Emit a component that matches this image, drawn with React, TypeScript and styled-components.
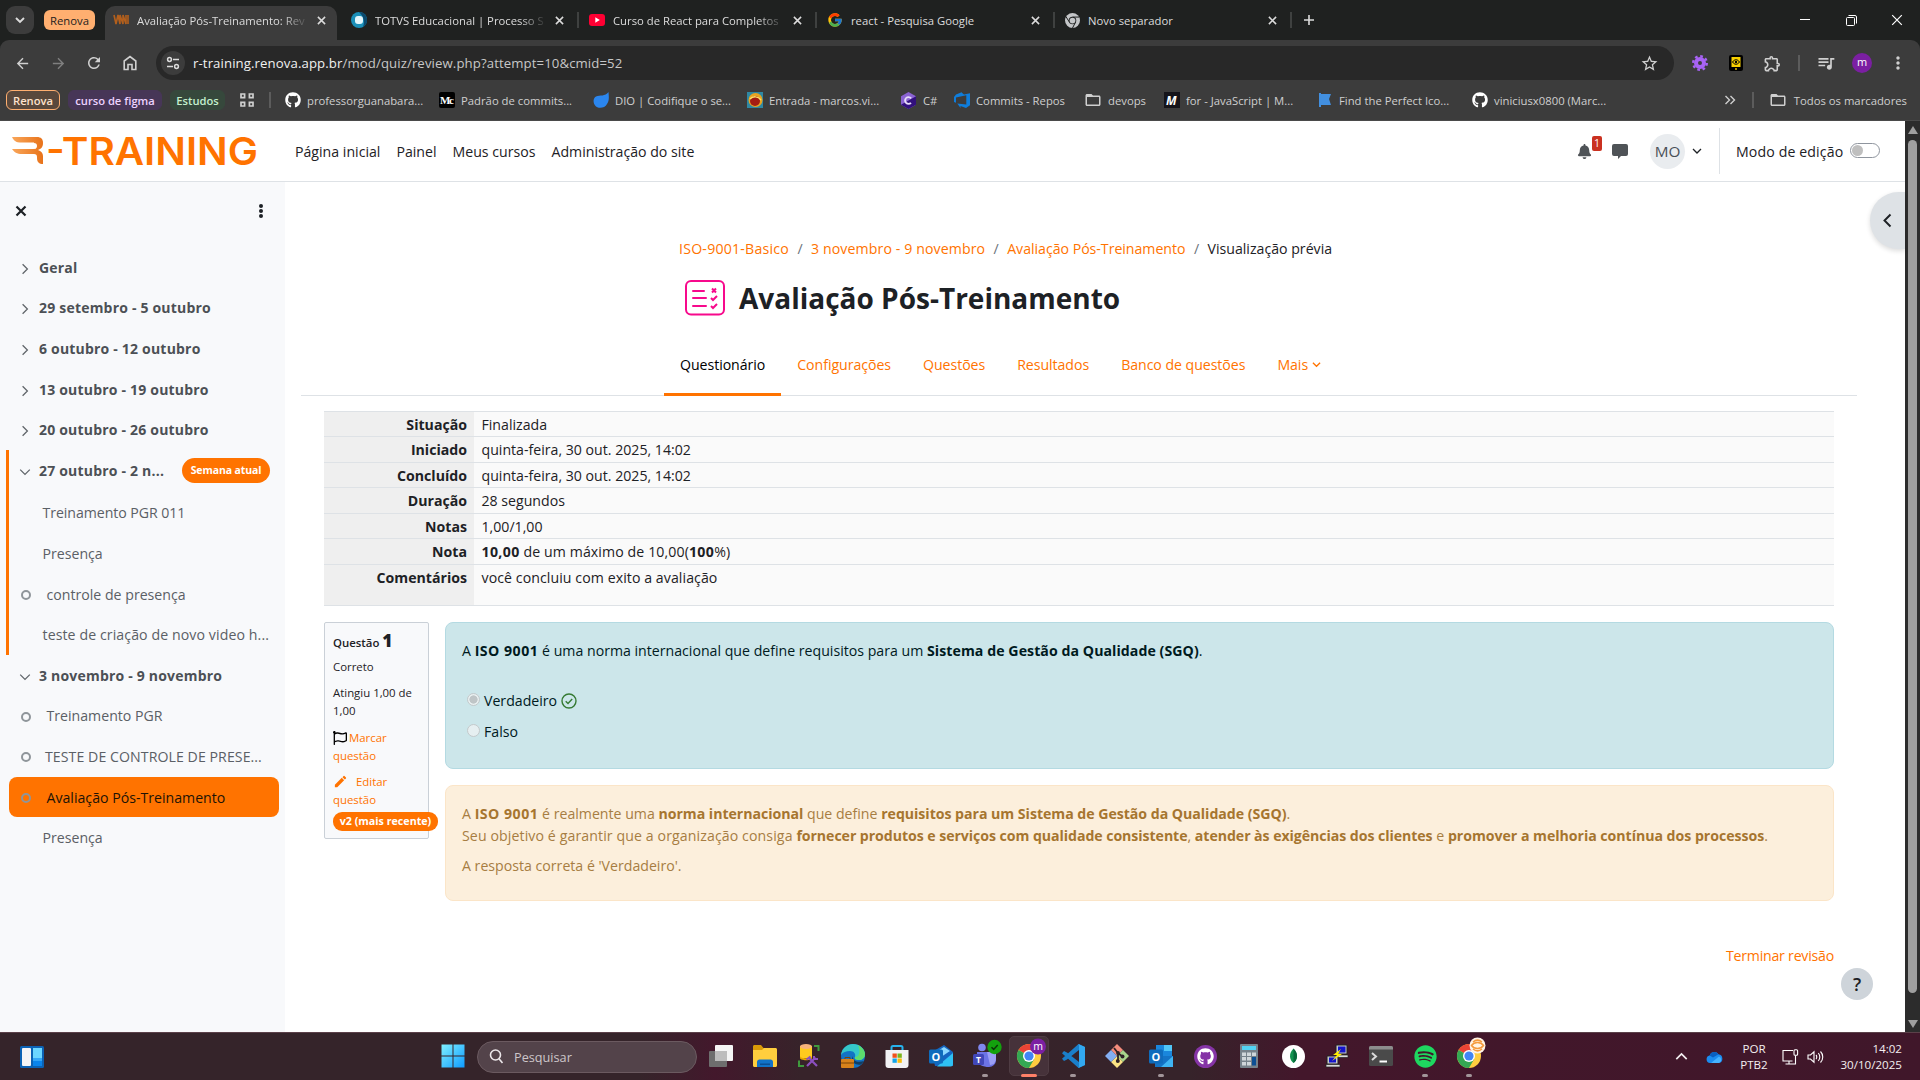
import React from "react";
import styled, { createGlobalStyle, css } from "styled-components";
import { FaGithub, FaBell, FaRegFlag, FaSpotify } from "react-icons/fa";
import { FcGoogle } from "react-icons/fc";
import {
  MdArrowBack, MdArrowForward, MdRefresh, MdStarBorder, MdOutlineExtension, MdQueueMusic, MdMoreVert,
  MdFolderOpen, MdModeEdit,
} from "react-icons/md";

const ORANGE = "#ff7300";
const FONT = `"Open Sans", "Noto Sans", sans-serif`;

const GlobalStyle = createGlobalStyle`
  * { box-sizing: border-box; }
  body { margin: 0; background: #fff; overflow: hidden; }
  svg { display: block; flex: none; }
  p { margin: 0; }
`;

const Screen = styled.div`
  width: 1920px;
  height: 1080px;
  display: flex;
  flex-direction: column;
  overflow: hidden;
  font-family: ${FONT};
  font-size: 14.15px;
  color: #1d2125;
  white-space: nowrap;
`;

/* ---------- Browser ---------- */

const TabStrip = styled.div`
  height: 40px;
  flex: none;
  display: flex;
  align-items: flex-end;
  background: #1f2120;
  padding-left: 6px;
  color: #dcdcdc;
  font-size: 11.3px;
`;
const TabSearch = styled.div`
  width: 28px;
  height: 28px;
  margin-bottom: 6px;
  border-radius: 9px;
  background: #3c3c3c;
  display: grid;
  place-items: center;
`;
const GroupChip = styled.div`
  width: 51px;
  height: 20px;
  margin: 0 10px 10px;
  border-radius: 6px;
  background: #ffaf70;
  color: #24211e;
  display: grid;
  place-items: center;
`;
const Tab = styled.div<{ $active?: boolean; $first?: boolean }>`
  width: ${(p) => (p.$active ? 232 : p.$first ? 242 : 238)}px;
  height: 34px;
  padding: 0 0 6px ${(p) => (p.$active ? 8 : p.$first ? 14 : 10)}px;
  display: flex;
  align-items: center;
  background: ${(p) => (p.$active ? "#3c3c3c" : "transparent")};
  border-radius: 10px 10px 0 0;
`;
const TabTitle = styled.span<{ $fade?: boolean }>`
  width: 180px;
  flex: none;
  margin-left: 8px;
  ${(p) => p.$fade && css`
    mask-image: linear-gradient(90deg, #000 145px, transparent 172px);
  `}
`;
const TabDivider = styled.i`
  width: 2px;
  height: 16px;
  margin-left: 13px;
  background: #3f4140;
`;
const NewTab = styled.div`
  width: 32px;
  height: 40px;
  display: grid;
  place-items: center;
`;
const WindowControls = styled.div`
  margin-left: auto;
  height: 40px;
  display: flex;
`;
const WindowButton = styled.div`
  width: 46px;
  display: grid;
  place-items: center;
`;
const ToolbarBack = styled.div`
  background: #1f2120;
`;
const Toolbar = styled.div`
  height: 46px;
  display: flex;
  align-items: center;
  background: #3c3c3c;
  color: #d0d0d0;
  border-radius: 9px 9px 0 0;
  padding: 0 4px;
`;
const ToolButton = styled.div<{ $dim?: boolean }>`
  width: 36px;
  height: 36px;
  display: grid;
  place-items: center;
  opacity: ${(p) => (p.$dim ? 0.45 : 1)};
`;
const AddressBar = styled.div`
  width: 1518px;
  height: 34px;
  margin-left: 8px;
  margin-right: 8px;
  border-radius: 17px;
  background: #282828;
  display: flex;
  align-items: center;
  padding: 0 7px 0 5px;
`;
const SiteInfo = styled.div`
  width: 24px;
  height: 24px;
  border-radius: 50%;
  background: #3c3c3c;
  display: grid;
  place-items: center;
  margin-right: 8px;
`;
const Url = styled.span`
  flex: 1;
  font-size: 13.2px;
  color: #c7c7c7;
  letter-spacing: 0.1px;
  b { font-weight: 400; color: #f1f1f1; }
`;
const ToolDivider = styled.i`
  width: 2px;
  height: 16px;
  margin: 0 8px;
  background: #5c5c5c;
`;
const Avatar = styled.div`
  width: 20px;
  height: 20px;
  border-radius: 50%;
  background: #7b1fa2;
  color: #fff;
  font-size: 11px;
  line-height: 18px;
  text-align: center;
`;
const Bookmarks = styled.div`
  height: 35px;
  flex: none;
  display: flex;
  align-items: center;
  padding: 0 13px 6px 6px;
  background: #3c3c3c;
  border-bottom: 1px solid #4a4a4a;
  color: #cfcfcf;
  font-size: 11.3px;
`;
const BookmarkChip = styled.div<{ $w: number; $bg: string; $fg: string; $line?: string }>`
  width: ${(p) => p.$w}px;
  height: 20px;
  margin-right: 8px;
  border-radius: 6px;
  border: 1px solid ${(p) => p.$line ?? p.$bg};
  background: ${(p) => p.$bg};
  color: ${(p) => p.$fg};
  font-weight: 600;
  font-size: 11.2px;
  display: grid;
  place-items: center;
`;
const BookmarkDivider = styled.i<{ $l: number; $r: number }>`
  width: 2px;
  height: 16px;
  margin: 0 ${(p) => p.$r}px 0 ${(p) => p.$l}px;
  background: #5c5c5c;
`;
const Bookmark = styled.div<{ $w: number }>`
  width: ${(p) => p.$w}px;
  display: flex;
  align-items: center;
  gap: 6px;
`;
const AppsButton = styled.div`
  width: 29px;
  padding-left: 7px;
`;
const BookmarksEnd = styled.div`
  margin-left: auto;
  display: flex;
  align-items: center;
`;
const AllBookmarks = styled.div`
  display: flex;
  align-items: center;
  gap: 7px;
`;

/* ---------- Site ---------- */

const Viewport = styled.div`
  height: 911px;
  flex: none;
  display: flex;
  background: #fff;
`;
const Site = styled.div`
  width: 1905px;
  display: flex;
  flex-direction: column;
`;
const ScrollTrack = styled.div`
  width: 15px;
  background: #2c2c2c;
  display: flex;
  flex-direction: column;
  align-items: center;
  justify-content: space-between;
  padding: 5px 0 4px;
`;
const ScrollThumb = styled.div`
  width: 9px;
  height: 853px;
  margin-bottom: 22px;
  border-radius: 5px;
  background: #9f9f9f;
`;
const Navbar = styled.header`
  height: 61px;
  flex: none;
  display: flex;
  align-items: center;
  border-bottom: 1px solid #dee2e6;
  padding-left: 12px;
`;
const NavLinks = styled.nav`
  display: flex;
  gap: 16px;
  margin-left: 37px;
  margin-top: 1px;
`;
const NavRight = styled.div`
  margin-left: auto;
  height: 60px;
  display: flex;
  align-items: center;
`;
const Bell = styled.div`
  position: relative;
  width: 40px;
  padding-left: 5px;
  color: #4f5357;
`;
const Count = styled.span`
  position: absolute;
  left: 20px;
  top: -8px;
  width: 10px;
  height: 15px;
  border-radius: 2px;
  background: #ca3120;
  color: #fff;
  font-size: 10.5px;
  line-height: 15px;
  text-align: center;
`;
const Initials = styled.div`
  width: 35px;
  height: 35px;
  margin: 1px 7px 0 22px;
  border-radius: 50%;
  background: #e9ecef;
  color: #495057;
  font-size: 15.3px;
  line-height: 34px;
  text-align: center;
`;
const EditMode = styled.div`
  width: 186px;
  height: 46px;
  margin-left: 17px;
  padding-left: 16px;
  border-left: 1px solid #dee2e6;
  letter-spacing: 0.12px;
  display: flex;
  align-items: center;
  gap: 7px;
`;
const Switch = styled.div`
  width: 30px;
  height: 15px;
  margin-top: -1px;
  border: 1px solid #8f959e;
  border-radius: 8px;
  padding: 1px;
  &::before {
    content: "";
    display: block;
    width: 11px;
    height: 11px;
    border-radius: 50%;
    background: #bfbfbf;
  }
`;
const Body = styled.div`
  flex: 1;
  display: flex;
  position: relative;
`;
const Sidebar = styled.aside`
  width: 285px;
  flex: none;
  background: #f8f9fb;
  display: flex;
  flex-direction: column;
`;
const SidebarTop = styled.div`
  height: 65px;
  padding: 21px 20px 0 14px;
  display: flex;
  justify-content: space-between;
`;
const Section = styled.section<{ $current?: boolean }>`
  border-left: 3px solid ${(p) => (p.$current ? ORANGE : "transparent")};
  margin-left: 6px;
`;
const SectionRow = styled.div`
  height: 40.6px;
  display: flex;
  align-items: center;
  padding-left: 10px;
  gap: 8px;
  color: #4c5055;
  font-weight: 700;
  font-size: 14px;
  letter-spacing: 0.2px;
  svg { margin-top: 3px; }
`;
const WeekBadge = styled.span`
  width: 88px;
  height: 25px;
  margin-left: 10px;
  border-radius: 13px;
  background: ${ORANGE};
  color: #fff;
  font-size: 10.5px;
  line-height: 24px;
  letter-spacing: -0.1px;
  text-align: center;
`;
const ActivityList = styled.div<{ $pad: number }>`
  padding-top: ${(p) => p.$pad}px;
`;
const Activity = styled.div<{ $selected?: boolean; $indent: number; $ls?: number }>`
  width: 270px;
  height: 40.6px;
  padding-left: ${(p) => p.$indent}px;
  display: flex;
  align-items: center;
  border-radius: 8px;
  background: ${(p) => (p.$selected ? ORANGE : "transparent")};
  color: ${(p) => (p.$selected ? "#1d1306" : "#5b6066")};
  letter-spacing: ${(p) => p.$ls ?? 0}px;
`;
const Dot = styled.i<{ $gap: number }>`
  width: 10px;
  height: 10px;
  margin: 2px ${(p) => p.$gap}px 0 0;
  border: 2px solid #8f959a;
  border-radius: 50%;
`;
const Content = styled.main`
  flex: 1;
  display: flex;
  flex-direction: column;
  padding: 54px 48px 0 16px;
`;
const PageHead = styled.div`
  padding-left: 378px;
`;
const Breadcrumb = styled.div`
  height: 24px;
  display: flex;
  align-items: center;
  gap: 8px;
  i { font-style: normal; color: #6a737b; width: 6px; text-align: center; }
`;
const Crumb = styled.a<{ $ls: number }>`
  color: ${ORANGE};
  letter-spacing: ${(p) => p.$ls}px;
`;
const TitleRow = styled.div`
  height: 36px;
  margin-top: 20px;
  padding-left: 6px;
  display: flex;
  align-items: center;
  gap: 14px;
`;
const Title = styled.h1`
  margin: 0;
  font-size: 28px;
  line-height: 36px;
  font-weight: 700;
`;
const SubTabs = styled.div`
  display: flex;
  height: 62px;
  margin-top: 18px;
  padding-left: 363px;
  border-bottom: 1px solid #dee2e6;
  letter-spacing: -0.05px;
`;
const SubTab = styled.div<{ $active?: boolean }>`
  height: 62px;
  padding: 2px 16px 0;
  display: flex;
  align-items: center;
  gap: 4px;
  color: ${(p) => (p.$active ? "#000" : ORANGE)};
  border-bottom: 3px solid ${(p) => (p.$active ? ORANGE : "transparent")};
`;
const Attempt = styled.div`
  padding: 14.5px 23px 0;
  display: flex;
  flex-direction: column;
`;
const Summary = styled.div`
  border-top: 1px solid #dee2e6;
`;
const SummaryRow = styled.div<{ $tall?: boolean }>`
  height: ${(p) => (p.$tall ? 41 : 25.5)}px;
  display: flex;
  border-bottom: 1px solid #dee2e6;
  background: #fafafa;
  line-height: 26px;
`;
const SummaryKey = styled.div`
  width: 150px;
  padding-right: 7px;
  text-align: right;
  font-weight: 700;
  background: #efefef;
`;
const SummaryValue = styled.div<{ $ls: number }>`
  padding-left: 7.5px;
  letter-spacing: ${(p) => p.$ls}px;
  b { letter-spacing: 0.35px; }
`;
const Question = styled.div`
  display: flex;
  align-items: flex-start;
  gap: 16px;
  margin-top: 16.5px;
`;
const Info = styled.div`
  width: 105px;
  height: 217px;
  flex: none;
  border: 1px solid #cad0d7;
  border-radius: 2px;
  background: #f8f9fb;
  padding: 7px 8px;
  font-size: 11.4px;
  line-height: 18px;
  white-space: normal;
`;
const InfoTitle = styled.div`
  height: 26px;
  line-height: 26px;
  font-weight: 600;
  font-size: 11.4px;
  white-space: nowrap;
  b { font-size: 17.5px; line-height: 20px; }
`;
const InfoText = styled.div<{ $mt: number }>`
  margin-top: ${(p) => p.$mt}px;
`;
const InfoLink = styled.div<{ $gap: number; $mt: number }>`
  margin-top: ${(p) => p.$mt}px;
  color: ${ORANGE};
  svg {
    display: inline-block;
    vertical-align: -3px;
    margin-right: ${(p) => p.$gap}px;
  }
`;
const Version = styled.div`
  width: 105px;
  height: 19px;
  margin-top: 3px;
  border-radius: 9px;
  background: ${ORANGE};
  color: #fff;
  font-weight: 700;
  font-size: 10.7px;
  line-height: 19px;
  text-align: center;
  white-space: nowrap;
`;
const Answers = styled.div`
  flex: 1;
  display: flex;
  flex-direction: column;
  gap: 16px;
`;
const Strong = styled.b<{ $ls: number }>`
  letter-spacing: ${(p) => p.$ls}px;
`;
const Spaced = styled.span`
  letter-spacing: 0.1px;
`;
const Formulation = styled.div`
  height: 147px;
  padding: 16px;
  border: 1px solid #b4dae2;
  border-radius: 8px;
  background: #cce6ea;
  color: #001a1e;
  line-height: 24px;
`;
const Choice = styled.label<{ $mt: number }>`
  height: 25px;
  margin-top: ${(p) => p.$mt}px;
  padding-left: 5px;
  display: flex;
  align-items: center;
  gap: 4px;
`;
const Radio = styled.i<{ $on?: boolean }>`
  width: 13px;
  height: 13px;
  margin-top: -2px;
  border: 1px solid #c3c9cb;
  border-radius: 50%;
  background: ${(p) => (p.$on ? "radial-gradient(circle, #bfc5c7 0 3.8px, #e8eff0 4.4px)" : "#e6eff1")};
`;
const Outcome = styled.div`
  height: 116px;
  padding: 17px 16px;
  border: 1px solid #fbe5c8;
  border-radius: 8px;
  background: #fcefdc;
  color: #a77d42;
  line-height: 22.4px;
  b { color: #a6752f; }
  p + p { margin-top: 7px; }
`;
const Finish = styled.a`
  align-self: flex-end;
  margin-top: 44px;
  line-height: 22px;
  letter-spacing: -0.22px;
  color: ${ORANGE};
`;
const DrawerToggle = styled.div`
  position: absolute;
  right: 0;
  top: 10px;
  width: 35px;
  height: 57px;
  border-radius: 29px 0 0 29px;
  background: #dee2e6;
  box-shadow: 0 2px 5px rgba(0, 0, 0, 0.14);
  display: grid;
  place-items: center;
`;
const Help = styled.div`
  position: absolute;
  right: 32px;
  bottom: 32px;
  width: 32px;
  height: 32px;
  border-radius: 50%;
  background: #ced4da;
  font-size: 18px;
  font-weight: 600;
  line-height: 32px;
  text-align: center;
`;

/* ---------- Taskbar ---------- */

const Taskbar = styled.footer`
  height: 48px;
  flex: none;
  display: flex;
  align-items: center;
  border-top: 1px solid #5b4049;
  background: linear-gradient(90deg, #35242a 0, #35242a 640px, #43182c 715px, #37232a 800px, #36232a 1190px, #43172b 1300px, #40172a 1920px);
  color: #f3eef0;
  font-size: 11.6px;
`;
const Widgets = styled.div`
  width: 431px;
  padding-left: 20px;
`;
const TaskbarApp = styled.div<{ $active?: boolean }>`
  position: relative;
  width: 44px;
  height: 44px;
  margin-top: -1px;
  display: grid;
  place-items: center;
  ${(p) => p.$active && css`
    &::before {
      content: "";
      position: absolute;
      inset: 2px;
      border-radius: 5px;
      border: 1px solid #4f3c43;
      background: #46323a;
    }
  `}
  svg { position: relative; }
`;
const Running = styled.i<{ $active?: boolean }>`
  position: absolute;
  bottom: 1px;
  left: 50%;
  width: ${(p) => (p.$active ? 16 : 6)}px;
  height: 3px;
  transform: translateX(-50%);
  border-radius: 2px;
  background: ${(p) => (p.$active ? "#ff8068" : "#a29599")};
`;
const SearchBox = styled.div`
  width: 220px;
  height: 32px;
  margin: 0 2px;
  padding-left: 11px;
  border-radius: 16px;
  border: 1px solid #6b5a60;
  background: #53434a;
  display: flex;
  align-items: center;
  gap: 11px;
  font-size: 12.7px;
  color: #cdc6c9;
`;
const Tray = styled.div`
  margin-left: auto;
  padding-right: 18px;
  display: flex;
  align-items: center;
`;
const TrayText = styled.div<{ $align: string; $w: number; $ml: number }>`
  width: ${(p) => p.$w}px;
  margin-left: ${(p) => p.$ml}px;
  text-align: ${(p) => p.$align};
  line-height: 16px;
`;
const TraySpace = styled.div`
  margin-left: 18px;
`;
const TrayIcons = styled.div`
  display: flex;
  align-items: center;
  gap: 8px;
  margin-left: 14px;
`;

/* ---------- Icons ---------- */

const Chevron = ({ dir = "down", size = 9, w = 1.4, color = "currentColor" }: { dir?: string; size?: number; w?: number; color?: string }) => {
  const turn = { down: 0, left: 90, up: 180, right: 270 }[dir] ?? 0;
  return (
    <svg width={size} height={size} viewBox="0 0 10 10">
      <path d="M1 3l4 4 4-4" fill="none" stroke={color} strokeWidth={w} transform={`rotate(${turn} 5 5)`} />
    </svg>
  );
};
const Cross = ({ size, w, color }: { size: number; w: number; color: string }) => (
  <svg width={size} height={size} viewBox="0 0 10 10">
    <path d="M1 1l8 8M9 1l-8 8" stroke={color} strokeWidth={w} fill="none" />
  </svg>
);

const Logo = () => (
  <svg width="246" height="32" viewBox="0 0 246 32">
    <defs>
      <linearGradient id="mark" x1="0" x2="1">
        <stop offset="0" stopColor="#f9a65a" />
        <stop offset="1" stopColor="#e8731a" />
      </linearGradient>
    </defs>
    <path d="M0 2h25c4 0 6 2 6 6s-2 6-5 7c3 1 5 3 5 6v8c-4 0-6-2-6-6v-1c0-2-1-3-3-3H10c-5 0-8-2-10-5h21c3 0 4-1 4-3s-1-3-3-3H10C5 8 2 6 0 2z" fill="url(#mark)" />
    <path d="M1 8h21M1 13h23" stroke="#fff" strokeWidth="1" />
    <text x="34" y="30" fontFamily="Inter, sans-serif" fontSize="38.5" fontWeight="600" fill={ORANGE} textLength="212" lengthAdjust="spacingAndGlyphs">
      -TRAINING
    </text>
  </svg>
);

const ChromeLogo = ({ size, mono, badge }: { size: number; mono?: boolean; badge?: string }) => (
  <svg width={size} height={size} viewBox="0 0 24 24" overflow="visible">
    <circle cx="12" cy="12" r="12" fill={mono ? "#c4c6c8" : "#ffcd40"} />
    {!mono && <path d="M12 12L1.6 6A12 12 0 0 1 22.4 6z" fill="#ea4335" />}
    {!mono && <path d="M1.6 6A12 12 0 0 0 12 24l5.2-9L12 12z" fill="#34a853" />}
    {mono && <path d="M12 6.5h10.4M7.2 14.8L1.6 6M16.8 14.8L12 24" stroke="#1f2120" strokeWidth="1.6" />}
    <circle cx="12" cy="12" r="6" fill={mono ? "#1f2120" : "#fff"} />
    <circle cx="12" cy="12" r="4.6" fill={mono ? "#c4c6c8" : "#4285f4"} />
    {badge === "m" && (
      <>
        <circle cx="21" cy="2.5" r="8" fill="#7b1fa2" />
        <text x="21" y="5.8" textAnchor="middle" fontSize="10.5" fontFamily={FONT} fill="#fff">m</text>
      </>
    )}
    {badge === "o" && (
      <>
        <circle cx="20.5" cy="1.5" r="8" fill="#fff3e4" />
        <path d="M14.5 1.5c3-4 9-4 12 0-3 4-9 4-12 0zM16 -2c3-2.500 6-2.500 9 0M16 5c3 2.500 6 2.500 9 0" fill="none" stroke="#f59a3c" strokeWidth="1.5" />
      </>
    )}
  </svg>
);

const RenovaFavicon = () => (
  <svg width="16" height="16" viewBox="0 0 16 16">
    <path d="M1 3l2 9 2-9 2 9V3l3 9V3l3 9V3M15 3v9" fill="none" stroke="#b35f1c" strokeWidth="1.6" />
  </svg>
);
const TotvsFavicon = () => (
  <svg width="16" height="16" viewBox="0 0 16 16">
    <circle cx="8" cy="8" r="8" fill="#1a8fb8" />
    <path d="M8 0a8 8 0 0 1 4 15c2-5 1-10-4-15z" fill="#0c4a6e" />
    <rect x="4" y="4" width="8" height="8" rx="3" fill="#e2f6fc" />
  </svg>
);
const YoutubeFavicon = () => (
  <svg width="16" height="16" viewBox="0 0 16 16">
    <rect y="2" width="16" height="12" rx="3" fill="#ff0033" />
    <path d="M6.3 5.300L10.800 8l-4.500 2.700z" fill="#fff" />
  </svg>
);
const AppsGrid = () => (
  <svg width="14" height="14" viewBox="0 0 14 14" fill="none" stroke="#cfcfcf" strokeWidth="1.7">
    <path d="M1 1h3.600v3.600H1zM9.400 1H13v3.600H9.400zM1 9.400h3.600V13H1zM9.400 9.400H13V13H9.400z" />
  </svg>
);
const MediumIcon = () => (
  <svg width="16" height="16" viewBox="0 0 16 16">
    <rect width="16" height="16" rx="2" fill="#000" />
    <text x="1" y="12" fontFamily="Liberation Serif, serif" fontWeight="700" fontSize="11" textLength="14" fill="#fff">Mc</text>
  </svg>
);
const DioIcon = () => (
  <svg width="16" height="16" viewBox="0 0 16 16">
    <path d="M15.500 0c.6 6 .6 9-1.500 12-2 4-8 5-11 2.500S-.5 6.500 3 4.500c4-1.500 9 0 12.500-4.500z" fill="#2b86ee" />
  </svg>
);
const InboxIcon = () => (
  <svg width="16" height="16" viewBox="0 0 16 16">
    <rect width="16" height="16" fill="#2f88a3" />
    <circle cx="8.500" cy="8" r="7" fill="#e9a420" />
    <circle cx="8" cy="9" r="5" fill="#a31c12" />
    <path d="M3 7c3-3 8-3 11 1" stroke="#ffe066" strokeWidth="1.500" fill="none" />
  </svg>
);
const CSharpIcon = () => (
  <svg width="17" height="17" viewBox="0 0 17 17">
    <path d="M8.500 0l7.500 4.200v8.600L8.500 17 1 12.800V4.200z" fill="#8a63d2" />
    <path d="M16 4.200v8.600L8.500 17 1 12.800z" fill="#32107d" />
    <circle cx="8.500" cy="8.500" r="3.400" fill="none" stroke="#e6dcf8" strokeWidth="1.900" strokeDasharray="16 5" strokeDashoffset="-2.500" />
  </svg>
);
const DevOpsIcon = () => (
  <svg width="16" height="16" viewBox="0 0 16 16">
    <path d="M0 5l2-2.500L7 .5V0l3 2.400 6-1.200v12L12 16l-5.500-2V16L3.300 11.500l9 1V3.200L2 5.400v5.400l-2-.9z" fill="#0f7ddb" />
  </svg>
);
const MdnIcon = () => (
  <svg width="16" height="16" viewBox="0 0 16 16">
    <rect width="16" height="16" fill="#15141a" />
    <text x="2" y="12.500" fontFamily={FONT} fontStyle="italic" fontWeight="700" fontSize="12" fill="#fff">M</text>
  </svg>
);
const FlagIcon = () => (
  <svg width="15" height="16" viewBox="0 0 15 16">
    <path d="M1 1h2v1h10l-2 5 2 6H3v2H1z" fill="#428fdf" />
  </svg>
);
const HomeIcon = () => (
  <svg width="14" height="16" viewBox="0 0 14 16" fill="none" stroke="#d0d0d0" strokeWidth="1.600">
    <path d="M1.200 6L7 1.500 12.800 6v8.500H9V9.500H5v5H1.200z" />
  </svg>
);
const TuneIcon = () => (
  <svg width="14" height="14" viewBox="0 0 14 14" fill="none" stroke="#dcdcdc" strokeWidth="1.500">
    <circle cx="3.500" cy="3.500" r="1.900" />
    <path d="M7 3.500h6M1 10.500h6" />
    <circle cx="10.500" cy="10.500" r="1.900" />
  </svg>
);
const PurpleGear = () => (
  <svg width="16" height="16" viewBox="0 0 16 16">
    <circle cx="8" cy="8" r="4" fill="none" stroke="#a863f5" strokeWidth="4" />
    <circle cx="8" cy="8" r="6.800" fill="none" stroke="#a863f5" strokeWidth="2.400" strokeDasharray="2.670 2.670" />
  </svg>
);
const PhoneIcon = () => (
  <svg width="14" height="16" viewBox="0 0 14 16">
    <rect width="14" height="16" rx="2" fill="#000" />
    <rect x="2.500" y="2" width="9" height="10" fill="#f8d000" />
    <path d="M3.500 7c2-3 5-3 7 0-2 3-5 3-7 0z" fill="none" stroke="#000" />
    <circle cx="7" cy="7" r="1.200" />
    <circle cx="7" cy="14" r=".9" fill="#f8d000" />
  </svg>
);
const ChatIcon = () => (
  <svg width="16" height="16" viewBox="0 0 16 16" fill="#4f5357">
    <path d="M2 1h12a2 2 0 0 1 2 2v8a2 2 0 0 1-2 2H9l-3 3v-3H2a2 2 0 0 1-2-2V3a2 2 0 0 1 2-2z" />
  </svg>
);
const QuizIcon = () => (
  <svg width="40" height="36" viewBox="0 0 40 36" fill="none" stroke="#f7098c" strokeWidth="2">
    <rect x="1" y="1" width="38" height="33.500" rx="5" />
    <path d="M8 11h11M8 18h13M8 26h13" strokeLinecap="round" />
    <path d="M27 8.500l4 4M31 8.500l-4 4M26 18l2 2 4-4M26 26l2 2 4-4" />
  </svg>
);
const CorrectIcon = () => (
  <svg width="16" height="16" viewBox="0 0 16 16" fill="none" stroke="#357a32" strokeWidth="1.400">
    <circle cx="8" cy="8" r="7" />
    <path d="M4.700 8.200l2.300 2.300 4.200-4.500" />
  </svg>
);

const WidgetsIcon = () => (
  <svg width="24" height="22" viewBox="0 0 24 22">
    <rect width="24" height="22" rx="1.500" fill="#0b62b5" />
    <rect x="2" y="2" width="9" height="18" rx="1" fill="#f4f4f6" />
    <path d="M13 2h9v10h-9z" fill="#6cd6ff" />
    <path d="M13 12h9v3h-9z" fill="#33a6f8" />
    <path d="M13 15h9v5h-9z" fill="#0a84ec" />
  </svg>
);
const WindowsIcon = () => (
  <svg width="24" height="24" viewBox="0 0 24 24">
    <linearGradient id="win" x1="0" y1="0" x2="1" y2="1" gradientUnits="objectBoundingBox">
      <stop offset="0" stopColor="#7ff0ff" />
      <stop offset="1" stopColor="#0e9bff" />
    </linearGradient>
    <path d="M.5.5h11v11H.5zM12.500.5h11v11h-11zM.5 12.500h11v11H.5zM12.500 12.500h11v11h-11z" fill="url(#win)" />
  </svg>
);
const TaskViewIcon = () => (
  <svg width="24" height="22" viewBox="0 0 24 22">
    <rect y="6" width="18" height="16" rx="1" fill="#6e6e6e" />
    <rect x="6" width="18" height="16" rx="1" fill="#f5f5f5" />
    <path d="M6 6h12v10H6z" fill="#bdbdbd" />
  </svg>
);
const ExplorerIcon = () => (
  <svg width="24" height="22" viewBox="0 0 24 22">
    <path d="M0 1.500C0 .6.6 0 1.500 0H8l2.500 3H22v5H0z" fill="#d99a08" />
    <path d="M0 5h9l2-2h11.500c.9 0 1.500.6 1.500 1.500v16c0 .9-.6 1.500-1.500 1.500h-21C.6 22 0 21.400 0 20.500z" fill="#ffce3e" />
    <path d="M4 22v-5c0-1.500 1-2.500 2.500-2.500h11c1.500 0 2.500 1 2.500 2.500v5z" fill="#1173c9" />
    <path d="M7 18.500h10v1.500H7z" fill="#0b4f94" />
  </svg>
);
const SqlIcon = () => (
  <svg width="22" height="24" viewBox="0 0 22 24">
    <path d="M2 2h12v12H2z" fill="#ffcb1f" />
    <path d="M2 12c0 3 12 3 12 0v2c0 3-12 3-12 0z" fill="#eaa800" />
    <ellipse cx="8" cy="2.500" rx="6" ry="2.500" fill="#f7b27a" />
    <path d="M16 2h4.500v5M1 16.500V22h5" fill="none" stroke="#3f9b3d" strokeWidth="2" />
    <path d="M9 22l8.500-8.500M11 14l8 8" stroke="#8c4fc0" strokeWidth="2.200" />
    <path d="M8.500 15.500l4-3M16 12v3h4" fill="none" stroke="#8c4fc0" strokeWidth="2" />
  </svg>
);
const EdgeIcon = () => (
  <svg width="24" height="24" viewBox="0 0 24 24">
    <circle cx="12" cy="12" r="12" fill="#1273c4" />
    <path d="M0 11C1 4 6 0 12 0c7 0 12 5 12 10 0 4-3 6-6 6s-5-1-4-3c1-3-1-6-5-6-4 0-7 1-9 4z" fill="#35c7c9" />
    <path d="M17 1.200C21 3 24 7 24 10c0 4-3 6-6 6s-5-1-4-3c4 0 6-5 3-11.800z" fill="#5ddc6c" />
    <path d="M12 12c-1 5 5 7 11 5-1 1.500-2 2.500-3 3.500-5 1-9-2-9-6z" fill="#123e63" />
    <rect y="15" width="13" height="9" rx="1" fill="#d9821b" />
    <path d="M4 15v-1.500h5V15M0 19h13" stroke="#7a4408" fill="none" />
  </svg>
);
const StoreIcon = () => (
  <svg width="24" height="24" viewBox="0 0 24 24">
    <path d="M6.500 8V3.500c0-1 .6-1.500 1.500-1.500h8c1 0 1.500.6 1.500 1.500V8" fill="none" stroke="#27b3ee" strokeWidth="2" />
    <path d="M.5 6h23v15a3 3 0 0 1-3 3h-17a3 3 0 0 1-3-3z" fill="#f2f2f4" />
    <path d="M7.500 9.500h4.300v4.300H7.500z" fill="#f1511b" />
    <path d="M12.500 9.500h4.300v4.300h-4.300z" fill="#7bb51c" />
    <path d="M7.500 14.500h4.300v4.300H7.500z" fill="#12a5e8" />
    <path d="M12.500 14.500h4.300v4.300h-4.300z" fill="#fbbc09" />
  </svg>
);
const OutlookIcon = ({ classic }: { classic?: boolean }) => (
  <svg width="24" height="24" viewBox="0 0 24 24">
    {classic ? (
      <>
        <path d="M7 1h16v12H7z" fill="#1a86dc" />
        <path d="M15 1h8v6h-8z" fill="#50c6f8" />
        <path d="M6 12h18v11H6z" fill="#1473c6" />
        <path d="M24 12v11H12z" fill="#3fb4f2" />
      </>
    ) : (
      <>
        <path d="M3 8L15 1l9 7v14H6z" fill="#1565c0" />
        <path d="M7 8l8-5 6 4-9 6z" fill="#8bd8ff" />
        <path d="M24 9v11a2.500 2.500 0 0 1-2.500 2.500H8z" fill="#2fc1f3" />
      </>
    )}
    <rect y="5.500" width="14" height="14" rx="1.500" fill="#0f6cbd" />
    <text x="7" y="16.500" textAnchor="middle" fontFamily={FONT} fontSize="11" fontWeight="700" fill="#fff">O</text>
  </svg>
);
const TeamsIcon = () => (
  <svg width="24" height="24" viewBox="0 0 24 24" overflow="visible">
    <circle cx="9" cy="3.500" r="3.800" fill="#7f87ee" />
    <path d="M4 8h17a2 2 0 0 1 2 2v6a7 7 0 0 1-7 7c-6 0-12-2-12-8z" fill="#6d74e6" />
    <path d="M14 8h7a2 2 0 0 1 2 2v5a6 6 0 0 1-6 6z" fill="#9b9ff5" />
    <rect y="10" width="11" height="11" rx="1.500" fill="#4147b8" />
    <text x="5.500" y="18.800" textAnchor="middle" fontFamily={FONT} fontSize="8.500" fontWeight="700" fill="#fff">T</text>
    <circle cx="21.500" cy="3" r="7.200" fill="#13a10e" />
    <path d="M18.500 3.200l2.200 2.200 4-4.300" fill="none" stroke="#0a3508" strokeWidth="1.500" />
  </svg>
);
const CodeIcon = () => (
  <svg width="24" height="24" viewBox="0 0 24 24">
    <path d="M17.500 0L24 3v18l-6.500 3L1 9.200 3 7l3 1.500L18 18V6L6 15.500 3 17l-2-2.200z" fill="#1a7fca" />
    <path d="M17.500 0L24 3v18l-6.500 3c.5-1 .5-2 .5-3V3c0-1 0-2-.5-3z" fill="#32a8f0" />
  </svg>
);
const GitIcon = () => (
  <svg width="24" height="24" viewBox="0 0 24 24">
    <path d="M12 0l6 6-6 6-6-6z" fill="#f58c7c" />
    <path d="M18 6l6 6-6 6-6-6z" fill="#a8d58c" />
    <path d="M12 12l6 6-6 6-6-6z" fill="#fbe384" />
    <path d="M6 6l6 6-6 6-6-6z" fill="#83aef2" />
    <path d="M9 4l4 5v8M13 9l5 4" fill="none" stroke="#2d2226" strokeWidth="1.800" />
    <circle cx="13" cy="9" r="1.900" fill="#2d2226" />
    <circle cx="12.800" cy="17" r="2" fill="#2d2226" />
    <circle cx="17.500" cy="12.500" r="2" fill="#2d2226" />
  </svg>
);
const GithubDesktop = () => (
  <svg width="23" height="23" viewBox="0 0 23 23">
    <circle cx="11.500" cy="11.500" r="11.500" fill="#8534a6" />
    <g transform="translate(3 3)"><FaGithub size={17} color="#fff" /></g>
  </svg>
);
const CalcIcon = () => (
  <svg width="18" height="24" viewBox="0 0 18 24">
    <rect width="18" height="24" rx="1" fill="#76828b" />
    <path d="M2 2h14v4H2z" fill="#52d4f4" />
    <path d="M2 8.500h4v3.500H2zM7 8.500h4v3.500H7zM12 8.500h4v3.500h-4zM2 13h4v3.500H2zM7 13h4v3.500H7zM2 18h4v3.500H2zM7 18h4v3.500H7z" fill="#cfd6da" />
    <path d="M12 13h4v8.500h-4z" fill="#0c4f94" />
  </svg>
);
const MongoIcon = () => (
  <svg width="23" height="23" viewBox="0 0 23 23">
    <circle cx="11.500" cy="11.500" r="11.500" fill="#fff" />
    <path d="M11.500 3.500c3 3 3.500 5.500 3.500 8s-1.500 5-3.500 6.500C9.500 16.500 8 14 8 11.500s.5-5 3.500-8z" fill="#12924f" />
    <path d="M11.500 3.500c3 3 3.500 5.500 3.500 8s-1.500 5-3.500 6.500z" fill="#07683a" />
  </svg>
);
const PuttyIcon = () => (
  <svg width="24" height="24" viewBox="0 0 24 24">
    <path d="M11 1h11v9H11zM2 12h11v8H2z" fill="#c9c9c9" stroke="#222" />
    <path d="M13 2.500h7.500v6H13zM4 13.500h7v5H4z" fill="#1414cc" />
    <path d="M13 11h10v2.500H13zM1 20.500h14V23H1z" fill="#dadada" stroke="#222" strokeWidth=".7" />
    <path d="M16 5l-8 6h4l-5 6 10-7h-4z" fill="#ffee00" />
  </svg>
);
const TerminalIcon = () => (
  <svg width="24" height="20" viewBox="0 0 24 20">
    <rect width="24" height="20" rx="1.500" fill="#4a4a4a" />
    <path d="M0 1.500Q0 0 1.500 0h21Q24 0 24 1.500V3.500H0z" fill="#8d8d8d" />
    <path d="M3 7l4 3.500L3 14" fill="none" stroke="#d9d9d9" strokeWidth="2" />
    <path d="M10.500 15.500H18" stroke="#fff" strokeWidth="2" />
  </svg>
);
const CloudIcon = () => (
  <svg width="17" height="12" viewBox="0 0 17 12">
    <path d="M4 12a3.800 3.800 0 0 1-.4-7.500A5 5 0 0 1 12.500 3.200 4.500 4.500 0 0 1 13 12z" fill="#1a8cf0" />
    <path d="M3.600 4.500A5 5 0 0 1 12.500 3.200L7 6.500z" fill="#0a5fc0" />
    <path d="M5 12l8-6.500a3.500 3.500 0 0 1 0 6.500z" fill="#46b3ff" />
  </svg>
);
const NetworkIcon = () => (
  <svg width="17" height="16" viewBox="0 0 17 16" fill="none" stroke="#fff" strokeWidth="1.100">
    <path d="M11 1.500H1v10.500h9.500M3.500 15h8M7 12v3M13.500 6.500V15h-3" />
    <rect x="12" y=".8" width="3.600" height="5.400" rx="1" />
  </svg>
);
const SpeakerIcon = () => (
  <svg width="17" height="14" viewBox="0 0 17 14" fill="none" stroke="#fff" strokeWidth="1.100">
    <path d="M1 5h2.500L7 1.800v10.400L3.500 9H1zM9 5c1 1 1 3 0 4M11.300 3.200c2 2 2 5.600 0 7.600M13.500 1.500c3 3 3 8 0 11" />
  </svg>
);
const MagnifierIcon = () => (
  <svg width="14" height="15" viewBox="0 0 14 15" fill="none" stroke="#ece7ea" strokeWidth="1.600">
    <circle cx="6.500" cy="6" r="5" />
    <path d="M10 9.800L13.500 14" />
  </svg>
);

/* ---------- Data ---------- */

const tabs = [
  { title: "Avaliação Pós-Treinamento: Rev", icon: <RenovaFavicon />, fade: true, active: true },
  { title: "TOTVS Educacional | Processo S", icon: <TotvsFavicon />, fade: true },
  { title: "Curso de React para Completos", icon: <YoutubeFavicon />, fade: true },
  { title: "react - Pesquisa Google", icon: <FcGoogle size={16} /> },
  { title: "Novo separador", icon: <ChromeLogo size={15} mono /> },
];

const bookmarks = [
  { w: 154, label: "professorguanabara...", icon: <FaGithub size={16} color="#fff" /> },
  { w: 154, label: "Padrão de commits...", icon: <MediumIcon /> },
  { w: 154, label: "DIO | Codifique o se...", icon: <DioIcon /> },
  { w: 153, label: "Entrada - marcos.vi...", icon: <InboxIcon /> },
  { w: 54, label: "C#", icon: <CSharpIcon /> },
  { w: 130, label: "Commits - Repos", icon: <DevOpsIcon /> },
  { w: 80, label: "devops", icon: <MdFolderOpen size={18} /> },
  { w: 154, label: "for - JavaScript | M...", icon: <MdnIcon /> },
  { w: 154, label: "Find the Perfect Ico...", icon: <FlagIcon /> },
  { w: 150, label: "viniciusx0800 (Marc...", icon: <FaGithub size={16} color="#fff" /> },
];

const closedSections = ["Geral", "29 setembro - 5 outubro", "6 outubro - 12 outubro", "13 outubro - 19 outubro", "20 outubro - 26 outubro"];

const summary: { key: string; value: React.ReactNode; ls?: number }[] = [
  { key: "Situação", value: "Finalizada" },
  { key: "Iniciado", value: "quinta-feira, 30 out. 2025, 14:02" },
  { key: "Concluído", value: "quinta-feira, 30 out. 2025, 14:02" },
  { key: "Duração", value: "28 segundos" },
  { key: "Notas", value: "1,00/1,00" },
  { key: "Nota", value: <><b>10,00</b> de um máximo de 10,00(<b>100</b>%)</>, ls: 0.1 },
  { key: "Comentários", value: "você concluiu com exito a avaliação", ls: 0.07 },
];

const apps = [
  { icon: <TaskViewIcon /> },
  { icon: <ExplorerIcon /> },
  { icon: <SqlIcon /> },
  { icon: <EdgeIcon /> },
  { icon: <StoreIcon /> },
  { icon: <OutlookIcon /> },
  { icon: <TeamsIcon />, running: true },
  { icon: <ChromeLogo size={24} badge="m" />, running: true, active: true },
  { icon: <CodeIcon />, running: true },
  { icon: <GitIcon /> },
  { icon: <OutlookIcon classic />, running: true },
  { icon: <GithubDesktop /> },
  { icon: <CalcIcon /> },
  { icon: <MongoIcon /> },
  { icon: <PuttyIcon /> },
  { icon: <TerminalIcon /> },
  { icon: <FaSpotify size={23} color="#1ed760" />, running: true },
  { icon: <ChromeLogo size={24} badge="o" />, running: true },
];

/* ---------- Parts ---------- */

const Browser = () => (
  <>
    <TabStrip>
      <TabSearch><Chevron size={10} w={1.9} /></TabSearch>
      <GroupChip>Renova</GroupChip>
      {tabs.map((t, i) => (
        <Tab key={t.title} $active={t.active} $first={i === 1}>
          {t.icon}
          <TabTitle $fade={t.fade}>{t.title}</TabTitle>
          <Cross size={9} w={1.7} color="#dcdcdc" />
          {i > 0 && <TabDivider />}
        </Tab>
      ))}
      <NewTab>
        <svg width="12" height="12" viewBox="0 0 12 12"><path d="M6 1v10M1 6h10" stroke="#dcdcdc" strokeWidth="1.600" /></svg>
      </NewTab>
      <WindowControls>
        <WindowButton><svg width="10" height="2"><path d="M0 .5h10" stroke="#fff" /></svg></WindowButton>
        <WindowButton>
          <svg width="11" height="11" viewBox="0 0 11 11" fill="none" stroke="#fff"><rect x=".5" y="2.500" width="8" height="8" rx="1" /><path d="M2.500.5H9Q10.500.5 10.500 2v6.500" /></svg>
        </WindowButton>
        <WindowButton><Cross size={12} w={1} color="#fff" /></WindowButton>
      </WindowControls>
    </TabStrip>
    <ToolbarBack>
      <Toolbar>
        <ToolButton><MdArrowBack size={17} /></ToolButton>
        <ToolButton $dim><MdArrowForward size={17} /></ToolButton>
        <ToolButton><MdRefresh size={18} /></ToolButton>
        <ToolButton><HomeIcon /></ToolButton>
        <AddressBar>
          <SiteInfo><TuneIcon /></SiteInfo>
          <Url><b>r-training.renova.app.br</b>/mod/quiz/review.php?attempt=10&amp;cmid=52</Url>
          <ToolButton><MdStarBorder size={19} /></ToolButton>
        </AddressBar>
        <ToolButton><PurpleGear /></ToolButton>
        <ToolButton><PhoneIcon /></ToolButton>
        <ToolButton><MdOutlineExtension size={19} /></ToolButton>
        <ToolDivider />
        <ToolButton><MdQueueMusic size={20} /></ToolButton>
        <ToolButton><Avatar>m</Avatar></ToolButton>
        <ToolButton><MdMoreVert size={20} /></ToolButton>
      </Toolbar>
    </ToolbarBack>
    <Bookmarks>
      <BookmarkChip $w={54} $bg="#59483c" $fg="#ffe3cd" $line="#ffaf70">Renova</BookmarkChip>
      <BookmarkChip $w={94} $bg="#473657" $fg="#ecd2ff">curso de figma</BookmarkChip>
      <BookmarkChip $w={55} $bg="#36483c" $fg="#c4f0cf">Estudos</BookmarkChip>
      <AppsButton><AppsGrid /></AppsButton>
      <BookmarkDivider $l={7} $r={14} />
      {bookmarks.map((b) => (
        <Bookmark key={b.label} $w={b.w}>{b.icon}{b.label}</Bookmark>
      ))}
      <BookmarksEnd>
        <svg width="12" height="10" viewBox="0 0 12 10"><path d="M1.500 1l4 4-4 4M6.500 1l4 4-4 4" fill="none" stroke="#cfcfcf" strokeWidth="1.400" /></svg>
        <BookmarkDivider $l={16} $r={15} />
        <AllBookmarks><MdFolderOpen size={18} />Todos os marcadores</AllBookmarks>
      </BookmarksEnd>
    </Bookmarks>
  </>
);

const CourseIndex = () => (
  <Sidebar>
    <SidebarTop>
      <svg width="14" height="16" viewBox="0 0 14 16"><path d="M2.500 3.500l9 9M11.500 3.500l-9 9" stroke="#1d2125" strokeWidth="2.200" /></svg>
      <svg width="8" height="16" viewBox="0 0 8 16" fill="#1d2125"><circle cx="4" cy="3" r="2" /><circle cx="4" cy="8" r="2" /><circle cx="4" cy="13" r="2" /></svg>
    </SidebarTop>
    {closedSections.map((s) => (
      <Section key={s}><SectionRow><Chevron dir="right" size={12} w={1.050} color="#5f6469" />{s}</SectionRow></Section>
    ))}
    <Section $current>
      <SectionRow><Chevron size={12} w={1.050} color="#5f6469" />27 outubro - 2 n...<WeekBadge>Semana atual</WeekBadge></SectionRow>
      <ActivityList $pad={2}>
        <Activity $indent={33.5} $ls={-0.06}>Treinamento PGR 011</Activity>
        <Activity $indent={33.5}>Presença</Activity>
        <Activity $indent={12}><Dot $gap={15.5} />controle de presença</Activity>
        <Activity $indent={33.5} $ls={0.09}>teste de criação de novo video h...</Activity>
      </ActivityList>
    </Section>
    <Section>
      <SectionRow><Chevron size={12} w={1.050} color="#5f6469" />3 novembro - 9 novembro</SectionRow>
      <ActivityList $pad={0}>
        <Activity $indent={12}><Dot $gap={15.5} />Treinamento PGR</Activity>
        <Activity $indent={12} $ls={0.06}><Dot $gap={14} />TESTE DE CONTROLE DE PRESE...</Activity>
        <Activity $indent={12} $selected><Dot $gap={15.5} />Avaliação Pós-Treinamento</Activity>
        <Activity $indent={33.5}>Presença</Activity>
      </ActivityList>
    </Section>
  </Sidebar>
);

const Review = () => (
  <Attempt>
    <Summary>
      {summary.map((row, i) => (
        <SummaryRow key={row.key} $tall={i === 6}>
          <SummaryKey>{row.key}</SummaryKey>
          <SummaryValue $ls={row.ls ?? 0}>{row.value}</SummaryValue>
        </SummaryRow>
      ))}
    </Summary>
    <Question>
      <Info>
        <InfoTitle>Questão <b>1</b></InfoTitle>
        <InfoText $mt={2}>Correto</InfoText>
        <InfoText $mt={8}>Atingiu 1,00 de 1,00</InfoText>
        <InfoLink $mt={9} $gap={2}><FaRegFlag size={14} color="#000" />Marcar questão</InfoLink>
        <InfoLink $mt={8} $gap={8}><MdModeEdit size={15} />Editar questão</InfoLink>
        <Version>v2 (mais recente)</Version>
      </Info>
      <Answers>
        <Formulation>
          <p>
            A <Strong $ls={0.5}>ISO 9001</Strong> é uma norma internacional que define requisitos para um{" "}
            <Strong $ls={0.06}>Sistema de Gestão da Qualidade (SGQ)</Strong>.
          </p>
          <Choice $mt={25}><Radio $on />Verdadeiro <CorrectIcon /></Choice>
          <Choice $mt={6}><Radio />Falso</Choice>
        </Formulation>
        <Outcome>
          <p>
            A <Strong $ls={0.5}>ISO 9001</Strong> é realmente uma <Strong $ls={-0.03}>norma internacional</Strong> que define{" "}
            <Strong $ls={-0.03}>requisitos para um Sistema de Gestão da Qualidade (SGQ)</Strong>.<br />
            <Spaced>Seu objetivo é garantir que a organização consiga </Spaced>
            <Strong $ls={-0.06}>fornecer produtos e serviços com qualidade consistente</Strong>,{" "}
            <Strong $ls={-0.06}>atender às exigências dos clientes</Strong> e{" "}
            <Strong $ls={-0.03}>promover a melhoria contínua dos processos</Strong>.
          </p>
          <p>A resposta correta é 'Verdadeiro'.</p>
        </Outcome>
      </Answers>
    </Question>
    <Finish>Terminar revisão</Finish>
  </Attempt>
);

const WindowsTaskbar = () => (
  <Taskbar>
    <Widgets><WidgetsIcon /></Widgets>
    <TaskbarApp><WindowsIcon /></TaskbarApp>
    <SearchBox><MagnifierIcon />Pesquisar</SearchBox>
    {apps.map((a, i) => (
      <TaskbarApp key={i} $active={a.active}>
        {a.icon}
        {a.running && <Running $active={a.active} />}
      </TaskbarApp>
    ))}
    <Tray>
      <Chevron dir="up" size={13} w={1.300} />
      <TraySpace><CloudIcon /></TraySpace>
      <TrayText $w={28} $ml={17} $align="center">POR<br />PTB2</TrayText>
      <TrayIcons><NetworkIcon /><SpeakerIcon /></TrayIcons>
      <TrayText $w={64} $ml={14} $align="right">14:02<br />30/10/2025</TrayText>
    </Tray>
  </Taskbar>
);

export default function App() {
  return (
    <Screen>
      <GlobalStyle />
      <Browser />
      <Viewport>
        <Site>
          <Navbar>
            <Logo />
            <NavLinks>
              <span>Página inicial</span><span>Painel</span><span>Meus cursos</span><span>Administração do site</span>
            </NavLinks>
            <NavRight>
              <Bell><FaBell size={15} /><Count>1</Count></Bell>
              <ChatIcon />
              <Initials>MO</Initials>
              <Chevron size={10} w={1.300} />
              <EditMode>Modo de edição<Switch /></EditMode>
            </NavRight>
          </Navbar>
          <Body>
            <CourseIndex />
            <Content>
              <PageHead>
                <Breadcrumb>
                  <Crumb $ls={0.22}>ISO-9001-Basico</Crumb><i>/</i>
                  <Crumb $ls={0.1}>3 novembro - 9 novembro</Crumb><i>/</i>
                  <Crumb $ls={-0.02}>Avaliação Pós-Treinamento</Crumb><i>/</i>
                  <span>Visualização prévia</span>
                </Breadcrumb>
                <TitleRow><QuizIcon /><Title>Avaliação Pós-Treinamento</Title></TitleRow>
              </PageHead>
              <SubTabs>
                <SubTab $active>Questionário</SubTab>
                <SubTab>Configurações</SubTab>
                <SubTab>Questões</SubTab>
                <SubTab>Resultados</SubTab>
                <SubTab>Banco de questões</SubTab>
                <SubTab>Mais <Chevron size={9} w={1.400} /></SubTab>
              </SubTabs>
              <Review />
            </Content>
            <DrawerToggle><Chevron dir="left" size={15} w={1.300} color="#1d2125" /></DrawerToggle>
            <Help>?</Help>
          </Body>
        </Site>
        <ScrollTrack>
          <svg width="10" height="8"><path d="M5 0l5 8H0z" fill="#9f9f9f" /></svg>
          <ScrollThumb />
          <svg width="10" height="8"><path d="M5 8l5-8H0z" fill="#9f9f9f" /></svg>
        </ScrollTrack>
      </Viewport>
      <WindowsTaskbar />
    </Screen>
  );
}
